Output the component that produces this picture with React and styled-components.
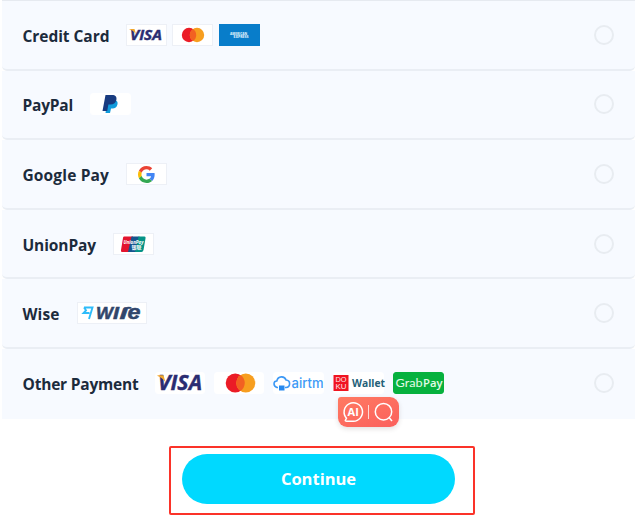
import React from "react";
import styled, { createGlobalStyle } from "styled-components";

const GlobalStyle = createGlobalStyle`
    body {
        margin: 0;
        background: #fff;
        font-family: "Open Sans", "Noto Sans", sans-serif;
        overflow: hidden;
    }
`;

const Page = styled.main`
    width: 643px;
    height: 517px;
    overflow: hidden;
`;

const MethodList = styled.div`
    width: 633px;
    margin-left: 2px;
    border-top: 1px solid #e6eaf0;
`;

const Method = styled.label`
    display: flex;
    align-items: center;
    box-sizing: border-box;
    height: 69.6px;
    padding: 0 21px 0 20.5px;
    background: #f7faff;
    border-bottom: 2px solid ${({ $last }) => ($last ? "#f7faff" : "#eaeef4")};
    border-radius: ${({ $last }) => ($last ? "0" : "0 0 5px 5px")};
`;

const MethodName = styled.span`
    flex: none;
    width: ${({ $width }) => $width}px;
    padding-top: 2px;
    color: #1c2b3c;
    font-size: 15.5px;
    font-weight: 700;
    line-height: 22px;
    letter-spacing: ${({ $spacing }) => $spacing || 0}px;
    white-space: nowrap;
`;

const Logos = styled.span`
    display: flex;
    flex: 1;
    gap: ${({ $gap }) => $gap || 5.5}px;
`;

const Badge = styled.span`
    box-sizing: border-box;
    width: ${({ $width }) => $width || 41}px;
    height: 22px;
    background: ${({ $color }) => $color || "#fff"};
    border: 1px solid ${({ $line }) => $line || "#edf0f6"};
    border-radius: ${({ $radius }) => $radius || 0}px;

    svg {
        display: block;
        margin: -1px;
        overflow: visible;
    }
`;

const Radio = styled.span`
    box-sizing: border-box;
    width: 20px;
    height: 20px;
    border: 2px solid #e8ecf1;
    border-radius: 50%;
`;

const Footer = styled.div`
    display: flex;
    margin: 27px 0 0 169px;
`;

const Highlight = styled.div`
    box-sizing: border-box;
    width: 306px;
    height: 69px;
    padding: 6px 11px;
    border: 2px solid #fb3329;
    border-radius: 2px;
`;

const ContinueButton = styled.button`
    display: block;
    width: 273px;
    height: 50px;
    padding: 0;
    color: #fff;
    background: #00d9ff;
    border: 0;
    border-radius: 25px;
    font-family: inherit;
    font-size: 16.5px;
    font-weight: 700;
    line-height: 50px;
`;

const FloatingTools = styled.div`
    position: absolute;
    top: 397px;
    left: 338px;
    display: flex;
    align-items: center;
    width: 61px;
    height: 30px;
    background: linear-gradient(160deg, #ff7a62, #fb605d);
    border-radius: 3px 9px 9px 9px;
    box-shadow: 0 2px 5px rgba(60, 40, 40, 0.14);
`;

function VisaLogo({ wide }) {
    return (
        <svg width={wide ? 49 : 41} height="22" viewBox={wide ? "0 0 49 22" : "0 0 41 22"}>
            <g transform={wide ? "translate(3 18.3)" : "translate(4 16)"}>
                <text
                    fontFamily="Open Sans"
                    fontSize={wide ? 20.5 : 15}
                    fontWeight="700"
                    fontStyle="italic"
                    fill="#2b2d72"
                    stroke="#2b2d72"
                    strokeWidth=".4"
                    textLength={wide ? 44 : 32}
                    lengthAdjust="spacingAndGlyphs"
                >
                    VISA
                </text>
                <path d={wide ? "M-.500-15h6l2 7C5.500-11 3-13-.500-14.300z" : "M-.500-11h5l1.400 5C4.200-8.200 2-10-.500-10.500z"} fill="#f2a72c" />
            </g>
        </svg>
    );
}

function MastercardLogo({ wide }) {
    return (
        <svg width={wide ? 49 : 41} height="22" viewBox={wide ? "0 0 49 22" : "0 0 41 22"}>
            <g transform={wide ? "translate(26.5 11) scale(1.32)" : "translate(21 11)"}>
                <circle cx="-4" r="7.200" fill="#eb1c26" />
                <circle cx="4" r="7.200" fill="#f79e1f" />
                <path d="M0-6a7.200 7.200 0 0 1 0 12A7.200 7.200 0 0 1 0-6z" fill="#f26122" />
            </g>
        </svg>
    );
}

function AmexLogo() {
    return (
        <svg width="41" height="22">
            <g fill="#d9ecf9" fontFamily="Open Sans" fontWeight="800" fontSize="2.800">
                <text x="11" y="11" textLength="17" lengthAdjust="spacingAndGlyphs">AMERICAN</text>
                <text x="14.500" y="14.400" textLength="15" lengthAdjust="spacingAndGlyphs">EXPRESS</text>
            </g>
        </svg>
    );
}

function PaypalLogo() {
    return (
        <svg width="41" height="22">
            <path d="M17.500 7h7c2.500.5 3.500 2 3 4.200-.6 3-2.500 4.300-5 4.300h-1.500l-1 4.500h-4.500z" fill="#119bdc" />
            <path d="M15.500 2h6.500c3.500 0 5 1.800 4.400 4.700-.5 3.200-2.700 4.800-6 4.800h-2l-1.200 6.500h-4.700z" fill="#183b80" />
        </svg>
    );
}

function GoogleLogo() {
    return (
        <svg width="41" height="22">
            <svg x="12" y="3" width="17" height="17" viewBox="0 0 48 48">
                <path fill="#ea4335" d="M24 9.500c3.540 0 6.710 1.220 9.210 3.600l6.850-6.850C35.900 2.380 30.470 0 24 0 14.620 0 6.510 5.380 2.560 13.220l7.980 6.190C12.430 13.720 17.740 9.500 24 9.500z" />
                <path fill="#4285f4" d="M46.980 24.550c0-1.570-.15-3.090-.38-4.550H24v9.020h12.940c-.58 2.960-2.260 5.480-4.780 7.180l7.730 6c4.510-4.180 7.090-10.360 7.090-17.650z" />
                <path fill="#fbbc05" d="M10.530 28.590A14.500 14.500 0 0 1 9.770 24c0-1.600.27-3.140.76-4.590l-7.980-6.190A23.900 23.900 0 0 0 0 24c0 3.880.92 7.540 2.560 10.780z" />
                <path fill="#34a853" d="M24 48c6.480 0 11.930-2.130 15.890-5.810l-7.730-6c-2.150 1.450-4.920 2.300-8.160 2.300-6.260 0-11.570-4.220-13.470-9.910l-7.980 6.190C6.510 42.620 14.620 48 24 48z" />
            </svg>
        </svg>
    );
}

function UnionPayLogo() {
    return (
        <svg width="41" height="22">
            <path d="M11 3.500h9l-3 15.500H9Q7.500 19 8 17L10 5Q10 3.500 11 3.500z" fill="#e3142e" />
            <path d="M18.500 3.500h8l-3 15.500H15z" fill="#17548e" />
            <path d="M25.500 3.500h6q1.500 0 1 2L30.500 17q-.5 2-2 2h-6.500z" fill="#059387" />
            <g fill="#fff" fontWeight="700">
                <text x="10.500" y="10.500" fontFamily="Open Sans" fontStyle="italic" fontSize="5" textLength="20" lengthAdjust="spacingAndGlyphs">UnionPay</text>
                <text x="18.500" y="16" fontFamily="Noto Sans CJK SC" fontSize="4.500" textLength="10" lengthAdjust="spacingAndGlyphs">银联</text>
            </g>
        </svg>
    );
}

function WiseLogo() {
    return (
        <svg width="70" height="22">
            <path d="M7 5.500h8.500L12 17M7 5.500l2 2.800-2.500 2.700h6" fill="none" stroke="#2ebcfa" strokeWidth="1.900" />
            <g fill="#31466b" stroke="#31466b" strokeWidth=".5" fontFamily="Liberation Sans" fontWeight="700" fontStyle="italic" fontSize="17">
                <text x="19" y="17" textLength="17" lengthAdjust="spacingAndGlyphs">W</text>
                <text x="36" y="17" textLength="6" lengthAdjust="spacingAndGlyphs">I</text>
                <text x="42.500" y="17" textLength="8" lengthAdjust="spacingAndGlyphs">ſ</text>
                <text x="50.500" y="17" fontSize="20.500" textLength="13" lengthAdjust="spacingAndGlyphs">e</text>
            </g>
        </svg>
    );
}

function AirtmLogo() {
    return (
        <svg width="51" height="22">
            <path d="M5 15.500H4C-.2 14 .3 9 3.800 9 5 3.800 11.500 3.600 13 8c4.800.3 4.800 7 0 7.500h-1" fill="none" stroke="#3c98f5" strokeWidth="1.600" />
            <path d="M6 13.500h5.500v5H6z" fill="#2689ef" />
            <text x="18.500" y="15.500" fill="#3d9af6" fontFamily="Inter" fontSize="13.500" fontWeight="500" textLength="32" lengthAdjust="spacingAndGlyphs">
                airtm
            </text>
        </svg>
    );
}

function DokuLogo() {
    return (
        <svg width="51" height="22">
            <rect y="3" x=".5" width="15" height="16" fill="#f01421" />
            <g fill="#ffe9e9" fontFamily="Liberation Sans" fontSize="6.500">
                <text x="2.500" y="9.800" textLength="11" lengthAdjust="spacingAndGlyphs">DO</text>
                <text x="2.500" y="17.400" textLength="11" lengthAdjust="spacingAndGlyphs">KU</text>
            </g>
            <text x="19" y="15.200" fill="#245f78" fontFamily="Open Sans" fontSize="11" fontWeight="700" textLength="33" lengthAdjust="spacingAndGlyphs">
                Wallet
            </text>
        </svg>
    );
}

function GrabPayLogo() {
    return (
        <svg width="51" height="22">
            <g fill="#e4fbe8" fontSize="11.500">
                <text x="2.500" y="15.300" fontFamily="Lato" textLength="27" lengthAdjust="spacingAndGlyphs">Grab</text>
                <text x="30" y="15.300" fontFamily="Open Sans" fontWeight="600" textLength="19.500" lengthAdjust="spacingAndGlyphs">Pay</text>
            </g>
        </svg>
    );
}

export default function App() {
    return (
        <Page>
            <GlobalStyle />
            <MethodList>
                <Method>
                    <MethodName $width={103} $spacing={-0.05}>Credit Card</MethodName>
                    <Logos>
                        <Badge><VisaLogo /></Badge>
                        <Badge><MastercardLogo /></Badge>
                        <Badge $color="#087dca" $line="#087dca"><AmexLogo /></Badge>
                    </Logos>
                    <Radio />
                </Method>
                <Method>
                    <MethodName $width={67} $spacing={-0.2}>PayPal</MethodName>
                    <Logos>
                        <Badge $line="#fff" $radius={3}><PaypalLogo /></Badge>
                    </Logos>
                    <Radio />
                </Method>
                <Method>
                    <MethodName $width={103} $spacing={0.15}>Google Pay</MethodName>
                    <Logos>
                        <Badge><GoogleLogo /></Badge>
                    </Logos>
                    <Radio />
                </Method>
                <Method>
                    <MethodName $width={90} $spacing={-0.1}>UnionPay</MethodName>
                    <Logos>
                        <Badge><UnionPayLogo /></Badge>
                    </Logos>
                    <Radio />
                </Method>
                <Method>
                    <MethodName $width={54} $spacing={0.1}>Wise</MethodName>
                    <Logos>
                        <Badge $width={70}><WiseLogo /></Badge>
                    </Logos>
                    <Radio />
                </Method>
                <Method $last>
                    <MethodName $width={132} $spacing={-0.2}>Other Payment</MethodName>
                    <Logos $gap={9}>
                        <Badge $width={50} $line="#fff" $radius={3}><VisaLogo wide /></Badge>
                        <Badge $width={50} $line="#fff" $radius={3}><MastercardLogo wide /></Badge>
                        <Badge $width={51} $line="#fff" $radius={3}><AirtmLogo /></Badge>
                        <Badge $width={51} $line="#fff" $radius={3}><DokuLogo /></Badge>
                        <Badge $width={51} $color="#07b13e" $line="#07b13e" $radius={3}><GrabPayLogo /></Badge>
                    </Logos>
                    <Radio />
                </Method>
            </MethodList>
            <Footer>
                <Highlight>
                    <ContinueButton>Continue</ContinueButton>
                </Highlight>
            </Footer>
            <FloatingTools>
                <svg width="61" height="30" fill="none" stroke="#fff" strokeWidth="1.500">
                    <path d="M8.500 24.200H15a9.200 9.200 0 1 0-6.500-3l-1.200 2.200q-.2.800 1.200.8z" />
                    <text x="15.200" y="19" fill="#fff" stroke="none" fontFamily="Open Sans" fontSize="11" fontWeight="700" textAnchor="middle">AI</text>
                    <path d="M30.500 8v14" strokeWidth="1" opacity=".75" />
                    <circle cx="45.500" cy="14.700" r="8.200" />
                    <path d="m51 20.500 3 3.500" />
                </svg>
            </FloatingTools>
        </Page>
    );
}
